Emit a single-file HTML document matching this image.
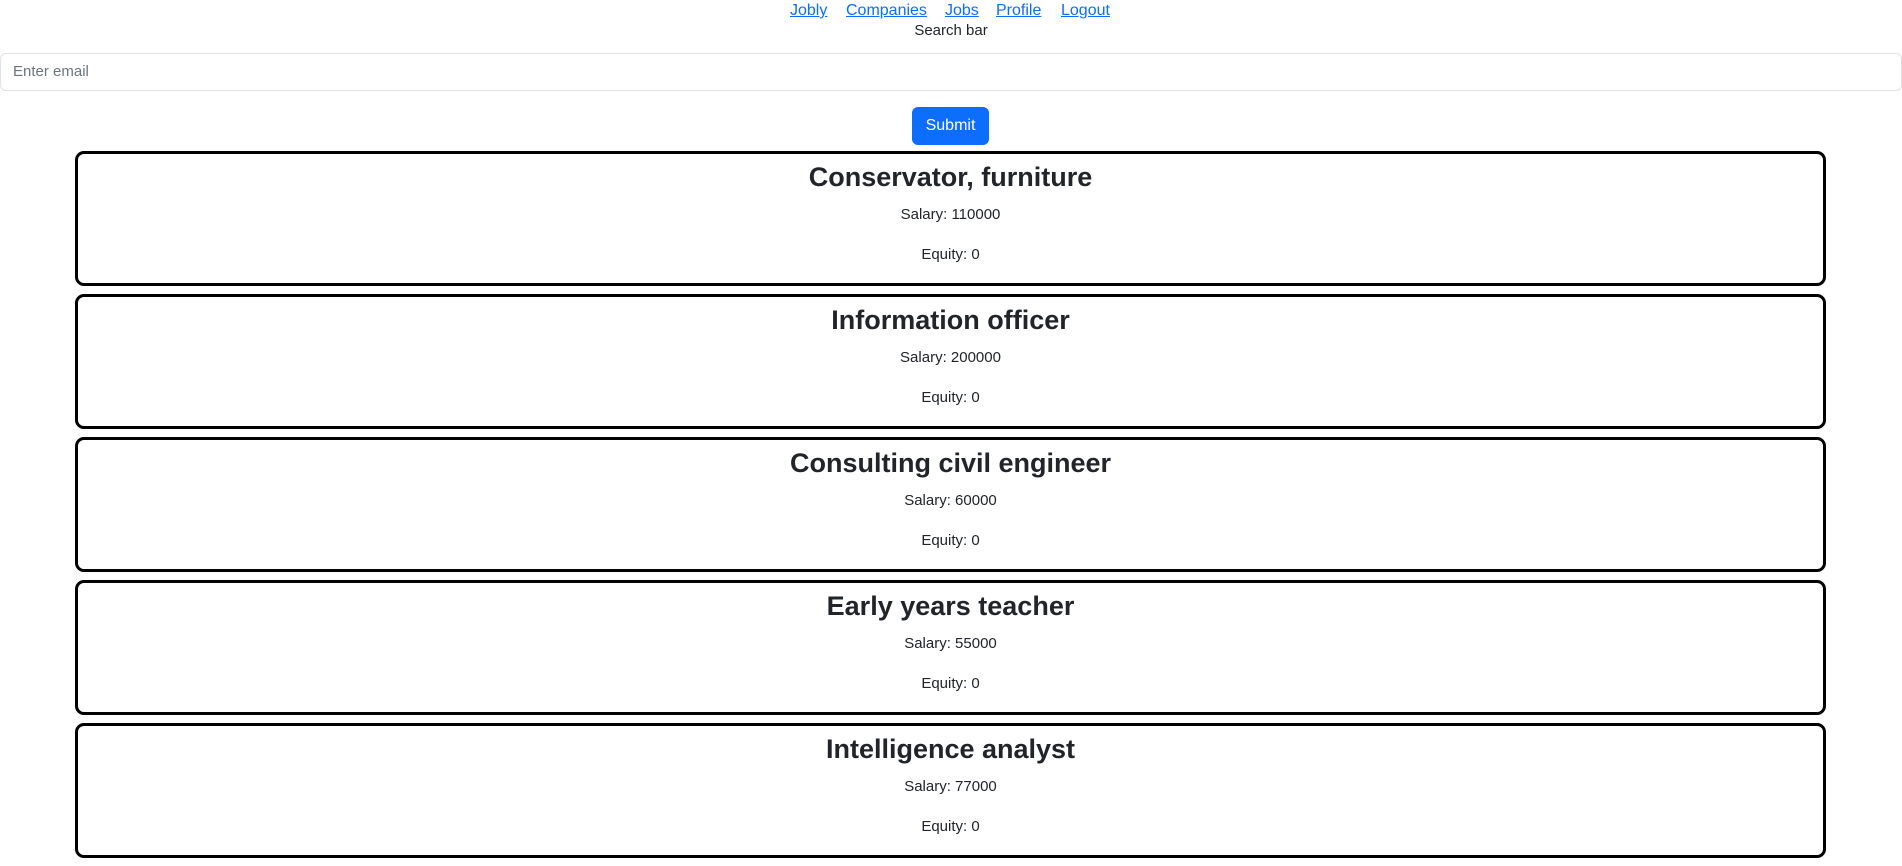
<!DOCTYPE html>
<html><head><meta charset="utf-8"><style>
body{margin:0;font-family:"Segoe UI","Liberation Sans","DejaVu Sans",sans-serif;color:#212529;background:#fff;font-size:16px;width:1902px;overflow:hidden}
.nav{position:relative;height:19px}
.nav a{position:absolute;top:-1px;color:#0d6efd;text-decoration:underline;font-size:16px;line-height:24px}
.sb{text-align:center;line-height:24px;margin-top:0;height:34px;font-size:15px}
.inp{margin:0;height:38px;border:1px solid #dee2e6;border-radius:6px;box-sizing:border-box;padding:0 12px;line-height:36px;color:#6c757d;font-size:15px}
.btn{position:absolute;left:912px;top:107px;width:77px;height:38px;background:#0d6efd;color:#fff;border-radius:6px;text-align:center;line-height:38px;font-size:16px}
.cards{position:absolute;left:75px;top:151px;width:1751px}
.card{box-sizing:border-box;height:135px;border:3px solid #000;border-radius:9px;margin-bottom:8px;text-align:center}
.card h2{margin:0 0 7px;font-size:27px;font-weight:bold;line-height:38px;padding-top:4px}
.card p{margin:0 0 16px;line-height:24px;font-size:15px}
</style></head><body>
<div class="nav">
<a style="left:790px">Jobly</a><a style="left:846px">Companies</a><a style="left:945px">Jobs</a><a style="left:996px">Profile</a><a style="left:1061px">Logout</a>
</div>
<div class="sb">Search bar</div>
<div class="inp">Enter email</div>
<div class="btn">Submit</div>
<div class="cards">
<div class="card"><h2>Conservator, furniture</h2><p>Salary: 110000</p><p>Equity: 0</p></div>
<div class="card"><h2>Information officer</h2><p>Salary: 200000</p><p>Equity: 0</p></div>
<div class="card"><h2>Consulting civil engineer</h2><p>Salary: 60000</p><p>Equity: 0</p></div>
<div class="card"><h2>Early years teacher</h2><p>Salary: 55000</p><p>Equity: 0</p></div>
<div class="card"><h2>Intelligence analyst</h2><p>Salary: 77000</p><p>Equity: 0</p></div>
</div>
</body></html>
